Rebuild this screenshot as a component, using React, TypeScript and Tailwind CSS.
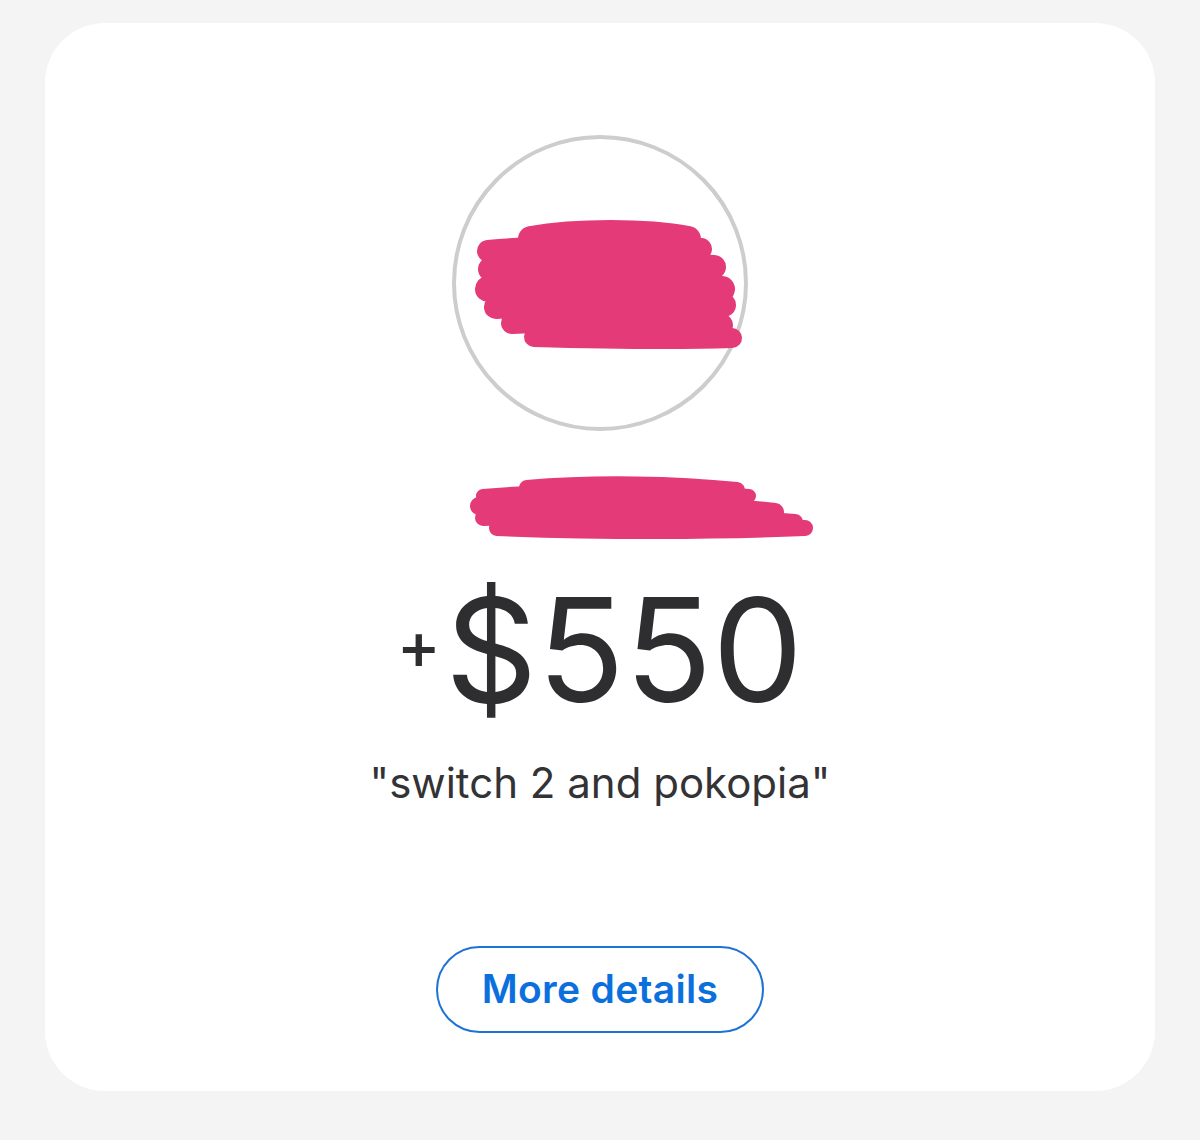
const pink = "#e43a78";

function AvatarScribble() {
  return (
    <svg
      className="absolute inset-0"
      width="296"
      height="296"
      viewBox="0 0 296 296"
      fill="none"
      stroke={pink}
      strokeLinecap="round"
      strokeLinejoin="round"
    >
      <path d="M75 100 C120 92 190 92 232 100" strokeWidth="26" />
      <path d="M32 112 C100 106 180 106 245 110" strokeWidth="22" />
      <path d="M34 130 C110 124 200 124 258 128" strokeWidth="24" />
      <path d="M32 150 C110 144 200 146 266 150" strokeWidth="26" />
      <path d="M40 168 C120 162 200 162 268 166" strokeWidth="24" />
      <path d="M56 184 C130 180 210 182 266 186" strokeWidth="22" />
      <path d="M78 198 C150 200 220 201 276 199" strokeWidth="20" />
    </svg>
  );
}

function NameScribble() {
  return (
    <svg
      width="420"
      height="64"
      viewBox="0 0 420 64"
      fill="none"
      stroke={pink}
      strokeLinecap="round"
      strokeLinejoin="round"
    >
      <path d="M130 12 C200 6 280 8 340 14" strokeWidth="16" />
      <path d="M86 20 C180 12 280 14 352 20" strokeWidth="14" />
      <path d="M82 30 C180 24 290 26 378 36" strokeWidth="18" />
      <path d="M86 42 C190 38 300 38 398 46" strokeWidth="16" />
      <path d="M100 52 C200 56 320 56 408 52" strokeWidth="16" />
    </svg>
  );
}

export default function App() {
  return (
    <div
      className="min-h-[1140px] w-[1200px] bg-[#f4f4f4] pt-[23px]"
      style={{ fontFamily: "Inter, 'Liberation Sans', sans-serif" }}
    >
      <div className="mx-[45px] flex h-[1068px] flex-col items-center rounded-[60px] bg-white pt-[112px]">
        <div className="relative h-[296px] w-[296px] rounded-full border-[4px] border-[#cdcdcd]">
          <AvatarScribble />
        </div>

        <div className="mt-[45px] ml-[13px]">
          <NameScribble />
        </div>

        <div className="mt-[38px] flex items-center text-[#2e2e31]">
          <span className="mr-[4px] -mt-[10px] text-[66px] font-medium leading-none">+</span>
          <span className="text-[144px] leading-none">$550</span>
        </div>

        <p className="mt-[40px] text-[42px] leading-none text-[#333336]">
          "switch 2 and pokopia"
        </p>

        <button className="mt-[142px] flex h-[87px] w-[328px] items-center justify-center rounded-full border-2 border-[#1d72d8] text-[39px] font-semibold tracking-[0.3px] text-[#0b70dd]">
          More details
        </button>
      </div>
    </div>
  );
}
